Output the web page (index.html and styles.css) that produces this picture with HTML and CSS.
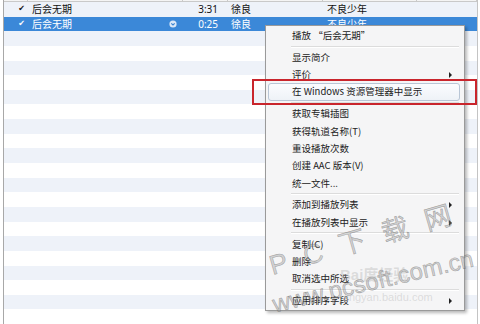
FILE: index.html
```html
<!DOCTYPE html>
<html lang="zh-CN">

<head>
    <meta charset="UTF-8">
    <meta name="viewport" content="width=device-width, initial-scale=1.0">
    <title>iTunes - 右键菜单</title>
    <link rel="stylesheet" href="styles.css">
</head>

<body>

    <section class="track-list">
        <div class="list-header">
            <div class="cell col-check"></div>
            <div class="cell col-name"></div>
            <div class="cell col-time"></div>
            <div class="cell col-artist"></div>
            <div class="cell col-album"></div>
            <div class="cell col-rest"></div>
        </div>

        <div class="row">
            <div class="cell col-check"><span class="check">✔</span></div>
            <div class="cell col-name"><span>后会无期</span></div>
            <div class="cell col-time">3:31</div>
            <div class="cell col-artist">徐良</div>
            <div class="cell col-album">不良少年</div>
            <div class="cell col-rest"></div>
        </div>
        <div class="row selected">
            <div class="cell col-check"><span class="check">✔</span></div>
            <div class="cell col-name">
                <span>后会无期</span>
                <svg class="row-icon" width="8" height="8" viewBox="0 0 8 8">
                    <circle cx="4" cy="4" r="3.6" fill="#dbe8f7" />
                    <path d="M2.3 3.3 L4 5 L5.7 3.3" fill="none" stroke="#3a84d2" stroke-width="1.1" />
                </svg>
            </div>
            <div class="cell col-time">0:25</div>
            <div class="cell col-artist">徐良</div>
            <div class="cell col-album">不良少年</div>
            <div class="cell col-rest"></div>
        </div>
        <div class="row"></div>
        <div class="row"></div>
        <div class="row"></div>
        <div class="row"></div>
        <div class="row"></div>
        <div class="row"></div>
        <div class="row"></div>
        <div class="row"></div>
        <div class="row"></div>
        <div class="row"></div>
        <div class="row"></div>
        <div class="row"></div>
        <div class="row"></div>
        <div class="row"></div>
        <div class="row"></div>
        <div class="row"></div>
        <div class="row"></div>
        <div class="row"></div>
        <div class="row"></div>
        <div class="row"></div>
    </section>

    <!-- context menu over the list -->
    <ul class="context-menu">
        <li class="item">播放 “后会无期”</li>
        <li class="sep"></li>
        <li class="item">显示简介</li>
        <li class="item sub">评价</li>
        <li class="item hover">在 Windows 资源管理器中显示</li>
        <li class="sep"></li>
        <li class="item">获取专辑插图</li>
        <li class="item">获得轨道名称(T)</li>
        <li class="item">重设播放次数</li>
        <li class="item">创建 AAC 版本(V)</li>
        <li class="item">统一文件...</li>
        <li class="sep"></li>
        <li class="item sub">添加到播放列表</li>
        <li class="item sub">在播放列表中显示</li>
        <li class="sep"></li>
        <li class="item">复制(C)</li>
        <li class="item">删除</li>
        <li class="item">取消选中所选</li>
        <li class="sep"></li>
        <li class="item sub">应用排序字段</li>
    </ul>

    <div class="highlight-box"></div>

    <!-- watermarks -->
    <div class="wm-title">P C 下 载 网</div>
    <div class="wm-url">www.pcsoft.com.cn</div>
    <div class="baidu-mark">
        <div>Bai度经验</div>
        <div class="baidu-url">jingyan.baidu.com</div>
    </div>

</body>

</html>
```

FILE: styles.css
```css
body, html {
    margin: 0;
    padding: 0;
    height: 100%;
    overflow: hidden;
    background: #fff;
    font-family: 'Noto Sans', 'Noto Sans CJK SC', sans-serif;
    color: #111;
}

.track-list {
    margin-left: 3px;
    width: 473px;
    border-left: 1px solid #a8a8a8;
    border-right: 1px solid #c4c4c4;
    height: 100%;
}

.list-header {
    display: flex;
    height: 1px;
    background: #f4f4f4;
    border-bottom: 1px solid #c9c9c9;
}

.list-header .cell {
    border-right: 1px solid #c9c9c9;
}

.row {
    display: flex;
    height: 14.65px;
    align-items: center;
    font-size: 10px;
    line-height: 1;
}

.row:nth-of-type(even) {
    background: #eef2f9;
}

.row.selected {
    background: #3b88d8;
    color: #fff;
}

.cell {
    box-sizing: border-box;
    height: 100%;
    display: flex;
    align-items: center;
    white-space: nowrap;
}

.col-check {
    width: 24px;
    justify-content: flex-end;
    padding-right: 3px;
}

.col-name {
    width: 155px;
    padding-left: 4px;
    padding-right: 6px;
    justify-content: space-between;
}

.col-time {
    width: 45px;
    justify-content: flex-end;
    padding-right: 10px;
}

.col-artist {
    width: 95px;
    padding-left: 3px;
}

.col-album {
    width: 94px;
    padding-left: 4px;
}

.col-rest {
    flex: 1;
}

.check {
    font-size: 8px;
    font-family: 'DejaVu Sans', sans-serif;
}

.row-icon {
    display: block;
}

/* context menu */
.context-menu {
    position: absolute;
    left: 265px;
    top: 25px;
    width: 200px;
    height: 286px;
    box-sizing: border-box;
    margin: 0;
    padding: 1px 2px;
    list-style: none;
    background: #f5f5f6;
    border: 1px solid #9a9a9a;
    box-shadow: 2px 2px 3px rgba(0, 0, 0, 0.28);
    font-family: 'Noto Sans CJK SC', sans-serif;
    font-size: 9.5px;
    color: #222;
}

.context-menu .item {
    position: relative;
    height: 17.3px;
    line-height: 17.3px;
    padding-left: 24px;
    box-sizing: border-box;
    white-space: nowrap;
}

.context-menu .sub::after {
    content: "";
    position: absolute;
    right: 10px;
    top: 6px;
    border-left: 3px solid #222;
    border-top: 3px solid transparent;
    border-bottom: 3px solid transparent;
}

.context-menu .hover {
    background: linear-gradient(to bottom, #fbfcfe 0%, #eef2f7 100%);
    border: 1px solid #b9c6d6;
    border-radius: 3px;
    padding-left: 23px;
    line-height: 15.3px;
    margin-right: 2px;
}

.context-menu .sep {
    height: 4.6px;
    margin-left: 23px;
    margin-right: 3px;
    display: flex;
    align-items: center;
}

.context-menu .sep::before {
    content: "";
    display: block;
    width: 100%;
    height: 1px;
    background: #dcdcdc;
    border-bottom: 1px solid #fff;
}

/* red annotation frame */
.highlight-box {
    position: absolute;
    left: 252px;
    top: 79px;
    width: 221px;
    height: 22px;
    border: 2.5px solid #c9252c;
}

/* watermarks */
.wm-title,
.wm-url {
    position: absolute;
    transform-origin: left top;
    white-space: nowrap;
    color: rgba(150, 150, 150, 0.4);
    -webkit-text-stroke: 0.6px rgba(90, 90, 90, 0.45);
    font-family: 'Liberation Sans', 'Noto Sans CJK SC', sans-serif;
    pointer-events: none;
}

.wm-title {
    left: 266px;
    top: 252px;
    transform: rotate(-16deg);
    font-size: 27px;
    line-height: 30px;
    letter-spacing: 5px;
}

.wm-url {
    left: 270px;
    top: 292px;
    transform: rotate(-13deg);
    font-size: 24px;
    line-height: 26px;
}

.baidu-mark {
    position: absolute;
    left: 340px;
    top: 266px;
    color: rgba(170, 170, 170, 0.35);
    font-family: 'Liberation Sans', 'Noto Sans CJK SC', sans-serif;
    font-size: 15px;
    font-weight: bold;
    line-height: 18px;
    pointer-events: none;
}

.baidu-url {
    font-size: 11px;
    font-weight: normal;
    margin-left: 4px;
    margin-top: 4px;
}
```
